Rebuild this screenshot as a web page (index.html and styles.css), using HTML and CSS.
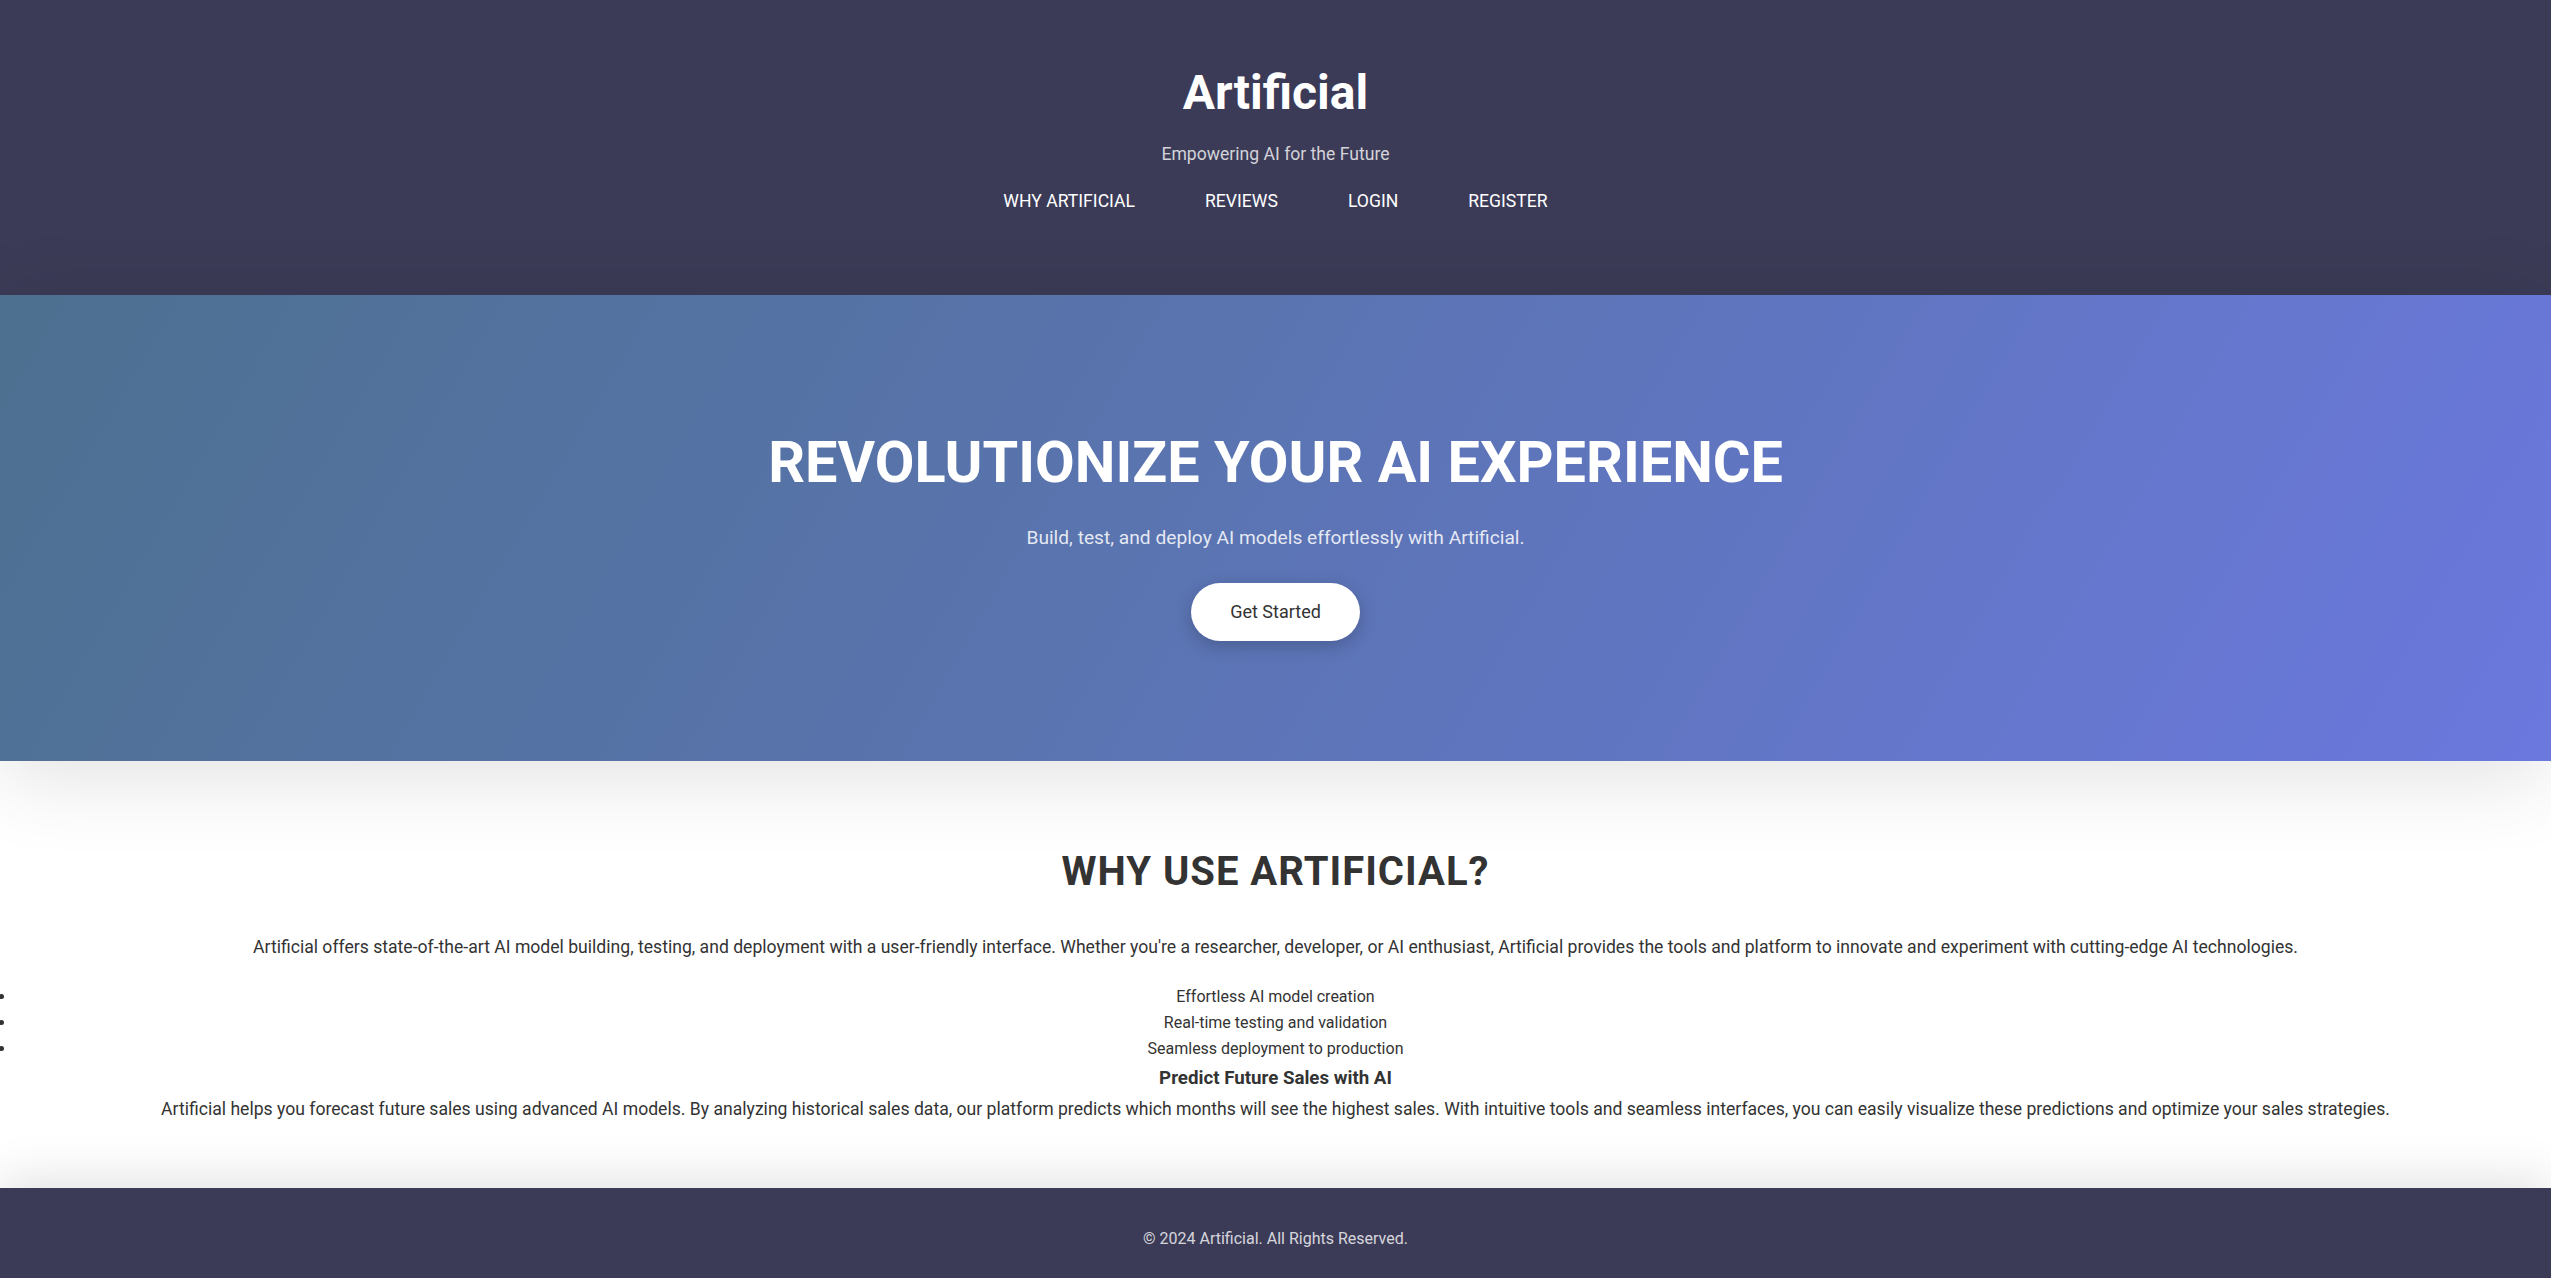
FILE: index.html
```html
<!DOCTYPE html>
<html lang="en">
<head>
<meta charset="utf-8">
<title>Artificial</title>
<link rel="stylesheet" href="styles.css">
</head>
<body>
<header class="site-header">
  <h1 class="brand">Artificial</h1>
  <p class="tagline">Empowering AI for the Future</p>
  <nav class="main-nav">
    <a href="#why">WHY ARTIFICIAL</a>
    <a href="#reviews">REVIEWS</a>
    <a href="#login">LOGIN</a>
    <a href="#register">REGISTER</a>
  </nav>
</header>
<section class="hero">
  <h2 class="hero-title">REVOLUTIONIZE YOUR AI EXPERIENCE</h2>
  <p class="hero-sub">Build, test, and deploy AI models effortlessly with Artificial.</p>
  <a class="cta" href="#start">Get Started</a>
</section>
<section class="why" id="why">
  <h2 class="why-title">WHY USE ARTIFICIAL?</h2>
  <p class="why-text">Artificial offers state-of-the-art AI model building, testing, and deployment with a user-friendly interface. Whether you're a researcher, developer, or AI enthusiast, Artificial provides the tools and platform to innovate and experiment with cutting-edge AI technologies.</p>
  <ul class="features">
    <li>Effortless AI model creation</li>
    <li>Real-time testing and validation</li>
    <li>Seamless deployment to production</li>
  </ul>
  <h3 class="predict-title">Predict Future Sales with AI</h3>
  <p class="predict-text">Artificial helps you forecast future sales using advanced AI models. By analyzing historical sales data, our platform predicts which months will see the highest sales. With intuitive tools and seamless interfaces, you can easily visualize these predictions and optimize your sales strategies.</p>
</section>
<footer class="site-footer">
  <p>&copy; 2024 Artificial. All Rights Reserved.</p>
</footer>
</body>
</html>
```
FILE: styles.css
```css
* { box-sizing: border-box; }

body {
  margin: 0;
  font-family: Roboto, "Liberation Sans", Arial, sans-serif;
  color: #333;
  background: #fff;
}

.site-header {
  background: #3c3b57;
  color: #fff;
  text-align: center;
  padding: 64px 20px 80px;
}

.brand {
  margin: 0;
  font-size: 48px;
  font-weight: 700;
  line-height: 1.2;
}

.tagline {
  margin: 18px 0 0;
  font-size: 17.6px;
  line-height: 1.6;
  color: rgba(255, 255, 255, 0.78);
}

.main-nav {
  margin-top: 19px;
  display: flex;
  justify-content: center;
  gap: 70px;
}

.main-nav a {
  color: #fff;
  text-decoration: none;
  font-size: 17.6px;
  line-height: 1.6;
}

.hero {
  background: linear-gradient(120deg, #4d7090 0%, #5a74b0 45%, #6b78de 100%);
  color: #fff;
  text-align: center;
  padding: 133px 20px 120px;
  box-shadow: 0 15px 80px rgba(0, 0, 0, 0.12);
  display: flex;
  flex-direction: column;
  align-items: center;
}

.hero-title {
  margin: 0;
  font-size: 57.6px;
  font-weight: 700;
  line-height: 1.2;
}

.hero-sub {
  margin: 26px 0 0;
  font-size: 19.2px;
  line-height: 1.6;
  color: rgba(255, 255, 255, 0.85);
}

.cta {
  margin-top: 29px;
  display: inline-block;
  background: #fff;
  color: #333;
  text-decoration: none;
  font-size: 18px;
  line-height: 28px;
  padding: 15px 39px;
  border-radius: 30px;
  box-shadow: 0 5px 18px rgba(0, 0, 0, 0.2);
}

.why {
  text-align: center;
  padding: 87px 16px 65px;
}

.why-title {
  margin: 0;
  font-size: 40px;
  font-weight: 700;
  line-height: 1.2;
  letter-spacing: 1px;
  color: #333;
}

.why-text {
  margin: 37px 0 0;
  font-size: 17.6px;
  line-height: 1.6;
}

.features {
  margin: 23px 0 0;
  padding: 0;
}

.features li {
  font-size: 16px;
  line-height: 26px;
}

.predict-title {
  margin: 2px 0 0;
  font-size: 18.72px;
  font-weight: 700;
  line-height: 1.6;
}

.predict-text {
  margin: 1px 0 0;
  font-size: 17.6px;
  line-height: 1.6;
}

.site-footer {
  background: #3c3b57;
  text-align: center;
  padding: 38px 20px 34px;
  box-shadow: 0 -8px 50px rgba(0, 0, 0, 0.12);
}

.site-footer p {
  margin: 0;
  font-size: 16px;
  line-height: 1.6;
  color: rgba(255, 255, 255, 0.8);
}
```
